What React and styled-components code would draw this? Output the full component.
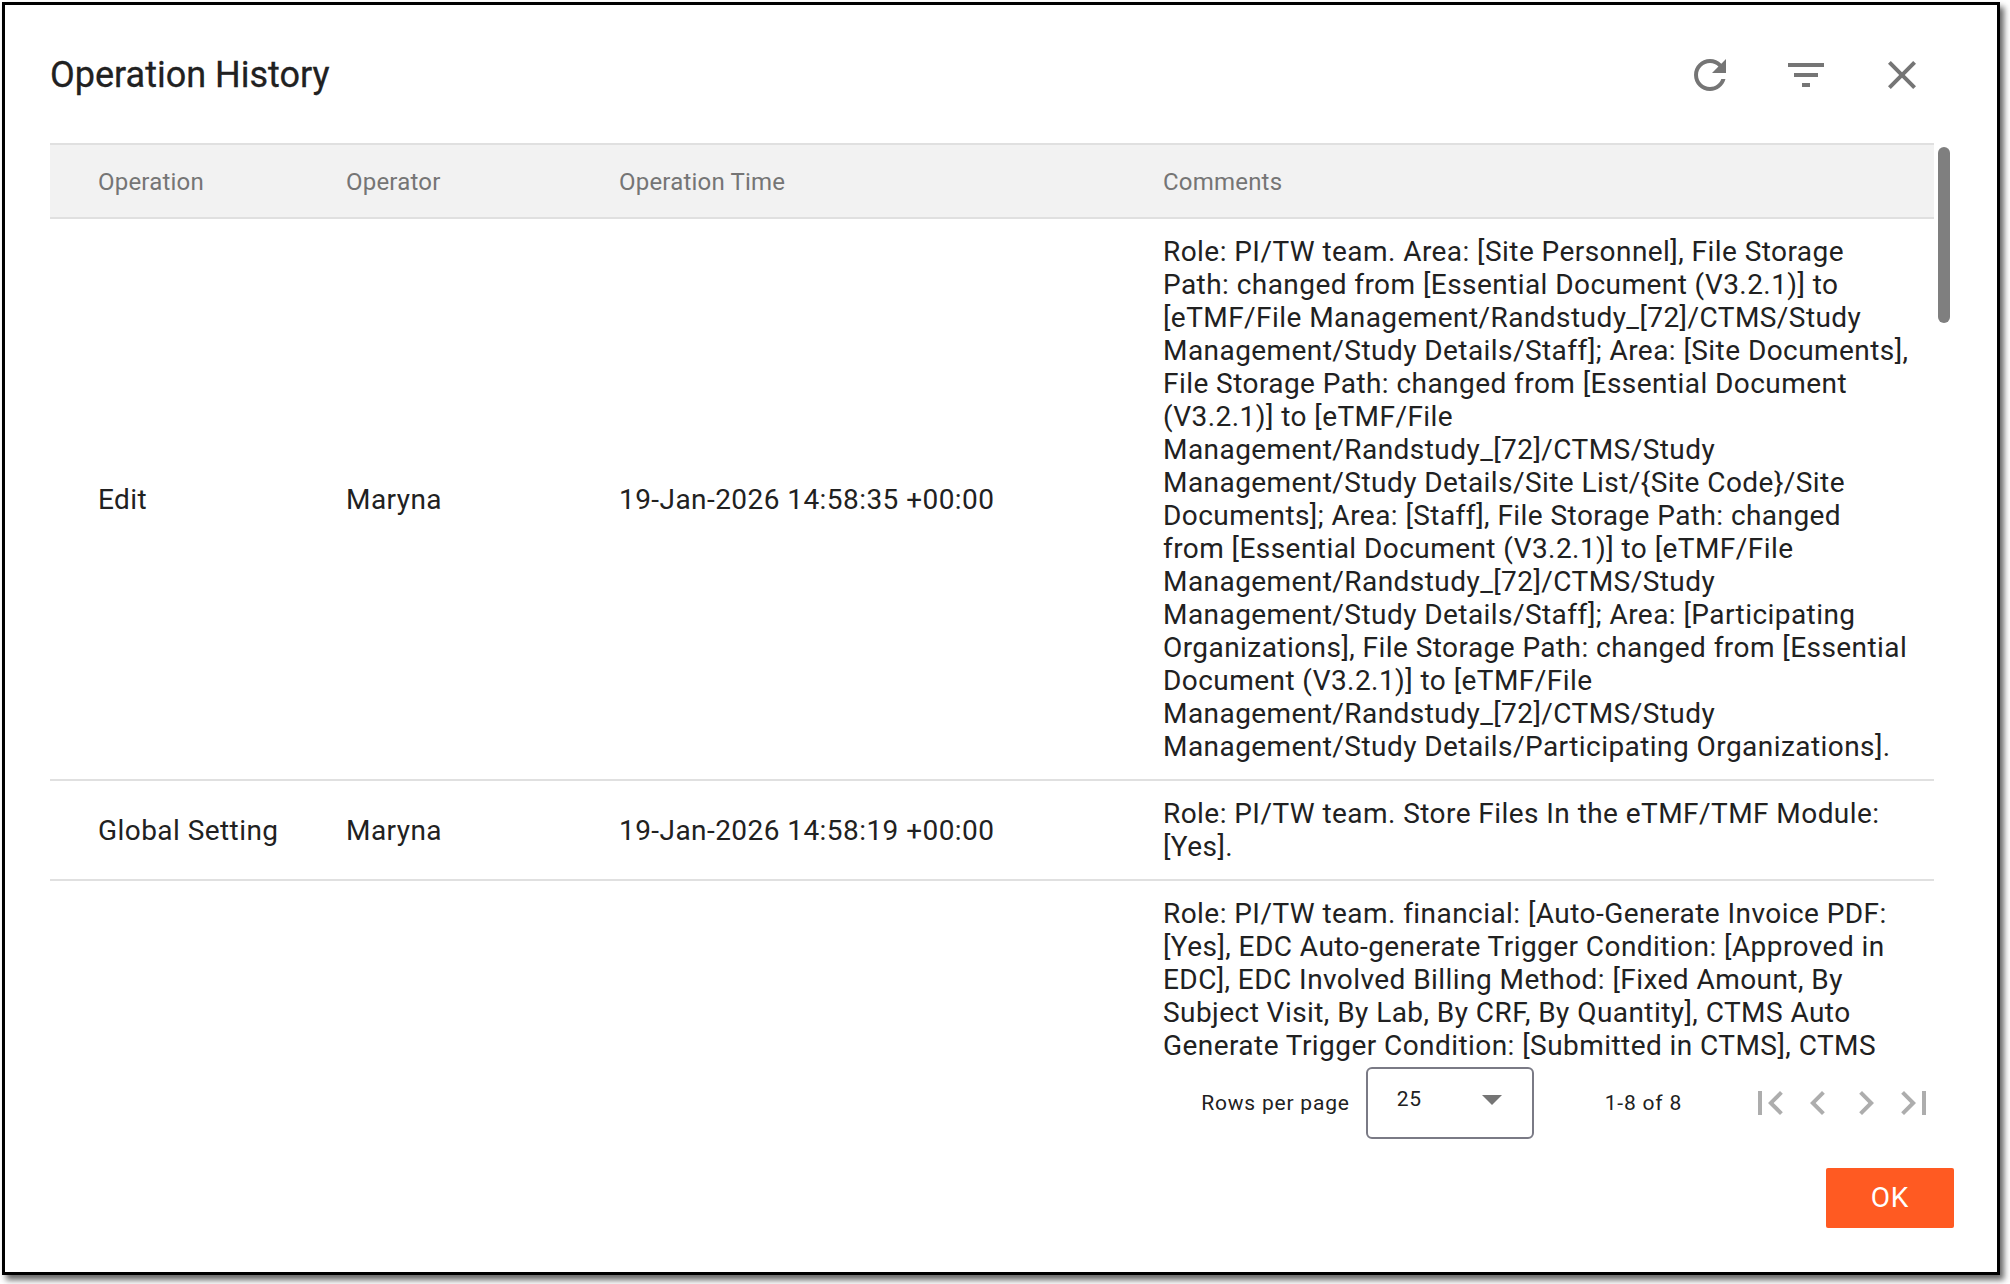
import React from "react";
import styled, { createGlobalStyle } from "styled-components";

const GlobalStyle = createGlobalStyle`
    html, body {
        margin: 0;
        padding: 0;
        height: 100%;
        background: #fff;
    }
    body {
        font-family: Roboto, "Liberation Sans", sans-serif;
        color: #212121;
        overflow: hidden;
    }
    #root {
        height: 1284px;
        padding-top: 2px;
        box-sizing: border-box;
    }
`;

const Dialog = styled.div`
    box-sizing: border-box;
    width: 1998px;
    height: 1273px;
    margin-left: 2px;
    border: 3px solid #000;
    background: #fff;
    box-shadow: 4px 5px 6px rgba(0, 0, 0, 0.6);
    display: flex;
    flex-direction: column;
`;

const Header = styled.div`
    box-sizing: border-box;
    height: 138px;
    flex: none;
    display: flex;
    align-items: center;
    padding: 2px 47px 0 45px;
`;

const Title = styled.h2`
    flex: 1;
    margin: 0;
    font-size: 36px;
    font-weight: 400;
    line-height: 44px;
    -webkit-text-stroke: 0.3px #212121;
    color: #212121;
`;

const IconButton = styled.button`
    width: 96px;
    height: 48px;
    padding: 0;
    border: none;
    background: none;
    display: flex;
    align-items: center;
    justify-content: center;
    color: #757575;
    svg {
        width: 48px;
        height: 48px;
        fill: currentColor;
    }
`;

const TableWrap = styled.div`
    position: relative;
    flex: 1;
    min-height: 0;
    overflow: hidden;
    padding-left: 45px;
`;

const Scrollbar = styled.div`
    position: absolute;
    left: 1933px;
    top: 4px;
    width: 12px;
    height: 176px;
    border-radius: 6px;
    background: #7f7f7f;
`;

const Table = styled.table`
    width: 1884px;
    table-layout: fixed;
    border-collapse: separate;
    border-spacing: 0;
`;

const HeadCell = styled.th`
    box-sizing: border-box;
    height: 76px;
    padding: 2px 0 0 48px;
    text-align: left;
    font-size: 24px;
    font-weight: 400;
    letter-spacing: 0.2px;
    color: #757575;
    background: #f2f2f2;
    border-top: 2px solid #e0e0e0;
    border-bottom: 2px solid #e0e0e0;
    width: ${(p) => p.$width}px;
`;

const Cell = styled.td`
    padding: 16px 0 16px 48px;
    font-size: 28px;
    line-height: 33px;
    letter-spacing: 0.44px;
    white-space: nowrap;
    color: #212121;
    border-bottom: 2px solid #e0e0e0;
    vertical-align: middle;
`;

const CommentCell = styled(Cell)`
    padding-right: 20px;
    white-space: pre-line;
`;

const Pagination = styled.div`
    height: 75px;
    flex: none;
    display: flex;
    align-items: center;
    justify-content: flex-end;
    padding-right: 59px;
    font-size: 21px;
    letter-spacing: 0.8px;
    color: #212121;
`;

const RowsLabel = styled.span`
    margin-right: 16px;
`;

const Select = styled.div`
    box-sizing: border-box;
    width: 168px;
    height: 72px;
    margin-right: 71px;
    padding: 0 30px 8px 29px;
    border: 2px solid #7a7a85;
    border-radius: 6px;
    display: flex;
    align-items: center;
    justify-content: space-between;
    svg {
        width: 48px;
        height: 48px;
        margin-right: -14px;
        fill: #757575;
    }
`;

const RangeLabel = styled.span`
    margin-right: 64px;
`;

const PageButton = styled.button`
    width: 48px;
    height: 48px;
    padding: 0;
    border: none;
    background: none;
    svg {
        display: block;
        width: 48px;
        height: 48px;
        fill: #adadad;
    }
`;

const Footer = styled.div`
    flex: none;
    height: 132px;
    display: flex;
    align-items: flex-start;
    justify-content: flex-end;
    padding: 28px 43px 0 0;
    box-sizing: border-box;
`;

const OkButton = styled.button`
    width: 128px;
    height: 60px;
    padding: 0 0 2px;
    border: none;
    border-radius: 2px;
    background: #ff5a22;
    color: #fff;
    font-family: inherit;
    font-size: 28px;
    font-weight: 400;
    letter-spacing: 0.8px;
`;

const Icon = ({ d }) => (
    <svg viewBox="0 0 24 24">
        <path d={d} />
    </svg>
);

const icons = {
    refresh: "M17.65 6.35C16.2 4.9 14.21 4 12 4c-4.42 0-7.99 3.58-7.99 8s3.57 8 7.99 8c3.73 0 6.84-2.55 7.73-6h-2.08c-.82 2.33-3.04 4-5.65 4-3.31 0-6-2.69-6-6s2.69-6 6-6c1.66 0 3.14.69 4.22 1.78L13 11h7V4l-2.35 2.35z",
    filter: "M10 18h4v-2h-4v2zM3 6v2h18V6H3zm3 7h12v-2H6v2z",
    close: "M19 6.41L17.59 5 12 10.59 6.41 5 5 6.41 10.59 12 5 17.59 6.41 19 12 13.41 17.59 19 19 17.59 13.41 12z",
    dropdown: "M7 10l5 5 5-5z",
    first: "M18.41 16.59L13.82 12l4.59-4.59L17 6l-6 6 6 6zM6 6h2v12H6z",
    prev: "M15.41 7.41L14 6l-6 6 6 6 1.41-1.41L10.83 12z",
    next: "M10 6L8.59 7.41 13.17 12l-4.58 4.58L10 18l6-6z",
    last: "M5.59 7.41L10.18 12l-4.59 4.59L7 18l6-6-6-6zM16 6h2v12h-2z",
};

const rows = [
    {
        operation: "Edit",
        operator: "Maryna",
        time: "19-Jan-2026 14:58:35 +00:00",
        comments:
            "Role: PI/TW team. Area: [Site Personnel], File Storage Path: changed from [Essential Document (V3.2.1)] to [eTMF/File Management/Randstudy_[72]/CTMS/Study Management/Study Details/Staff]; Area: [Site Documents], File Storage Path: changed from [Essential Document (V3.2.1)] to [eTMF/File Management/Randstudy_[72]/CTMS/Study Management/Study Details/Site List/{Site Code}/Site Documents]; Area: [Staff], File Storage Path: changed\nfrom [Essential Document (V3.2.1)] to [eTMF/File Management/Randstudy_[72]/CTMS/Study Management/Study Details/Staff]; Area: [Participating Organizations], File Storage Path: changed from [Essential Document (V3.2.1)] to [eTMF/File Management/Randstudy_[72]/CTMS/Study Management/Study Details/Participating Organizations].",
    },
    {
        operation: "Global Setting",
        operator: "Maryna",
        time: "19-Jan-2026 14:58:19 +00:00",
        comments: "Role: PI/TW team. Store Files In the eTMF/TMF Module: [Yes].",
    },
    {
        operation: "",
        operator: "",
        time: "",
        comments:
            "Role: PI/TW team. financial: [Auto-Generate Invoice PDF: [Yes], EDC Auto-generate Trigger Condition: [Approved in EDC], EDC Involved Billing Method: [Fixed Amount, By Subject Visit, By Lab, By CRF, By Quantity], CTMS Auto Generate Trigger Condition: [Submitted in CTMS], CTMS",
    },
];

const App = () => {
    return (
        <>
            <GlobalStyle />
            <Dialog>
                <Header>
                    <Title>Operation History</Title>
                    <IconButton><Icon d={icons.refresh} /></IconButton>
                    <IconButton><Icon d={icons.filter} /></IconButton>
                    <IconButton><Icon d={icons.close} /></IconButton>
                </Header>
                <TableWrap>
                    <Table>
                        <thead>
                            <tr>
                                <HeadCell $width={248}>Operation</HeadCell>
                                <HeadCell $width={273}>Operator</HeadCell>
                                <HeadCell $width={544}>Operation Time</HeadCell>
                                <HeadCell $width={819}>Comments</HeadCell>
                            </tr>
                        </thead>
                        <tbody>
                            {rows.map((row, i) => (
                                <tr key={i}>
                                    <Cell>{row.operation}</Cell>
                                    <Cell>{row.operator}</Cell>
                                    <Cell>{row.time}</Cell>
                                    <CommentCell>{row.comments}</CommentCell>
                                </tr>
                            ))}
                        </tbody>
                    </Table>
                    <Scrollbar />
                </TableWrap>
                <Pagination>
                    <RowsLabel>Rows per page</RowsLabel>
                    <Select>
                        <span>25</span>
                        <Icon d={icons.dropdown} />
                    </Select>
                    <RangeLabel>1-8 of 8</RangeLabel>
                    <PageButton><Icon d={icons.first} /></PageButton>
                    <PageButton><Icon d={icons.prev} /></PageButton>
                    <PageButton><Icon d={icons.next} /></PageButton>
                    <PageButton><Icon d={icons.last} /></PageButton>
                </Pagination>
                <Footer>
                    <OkButton>OK</OkButton>
                </Footer>
            </Dialog>
        </>
    );
};

export default App;
